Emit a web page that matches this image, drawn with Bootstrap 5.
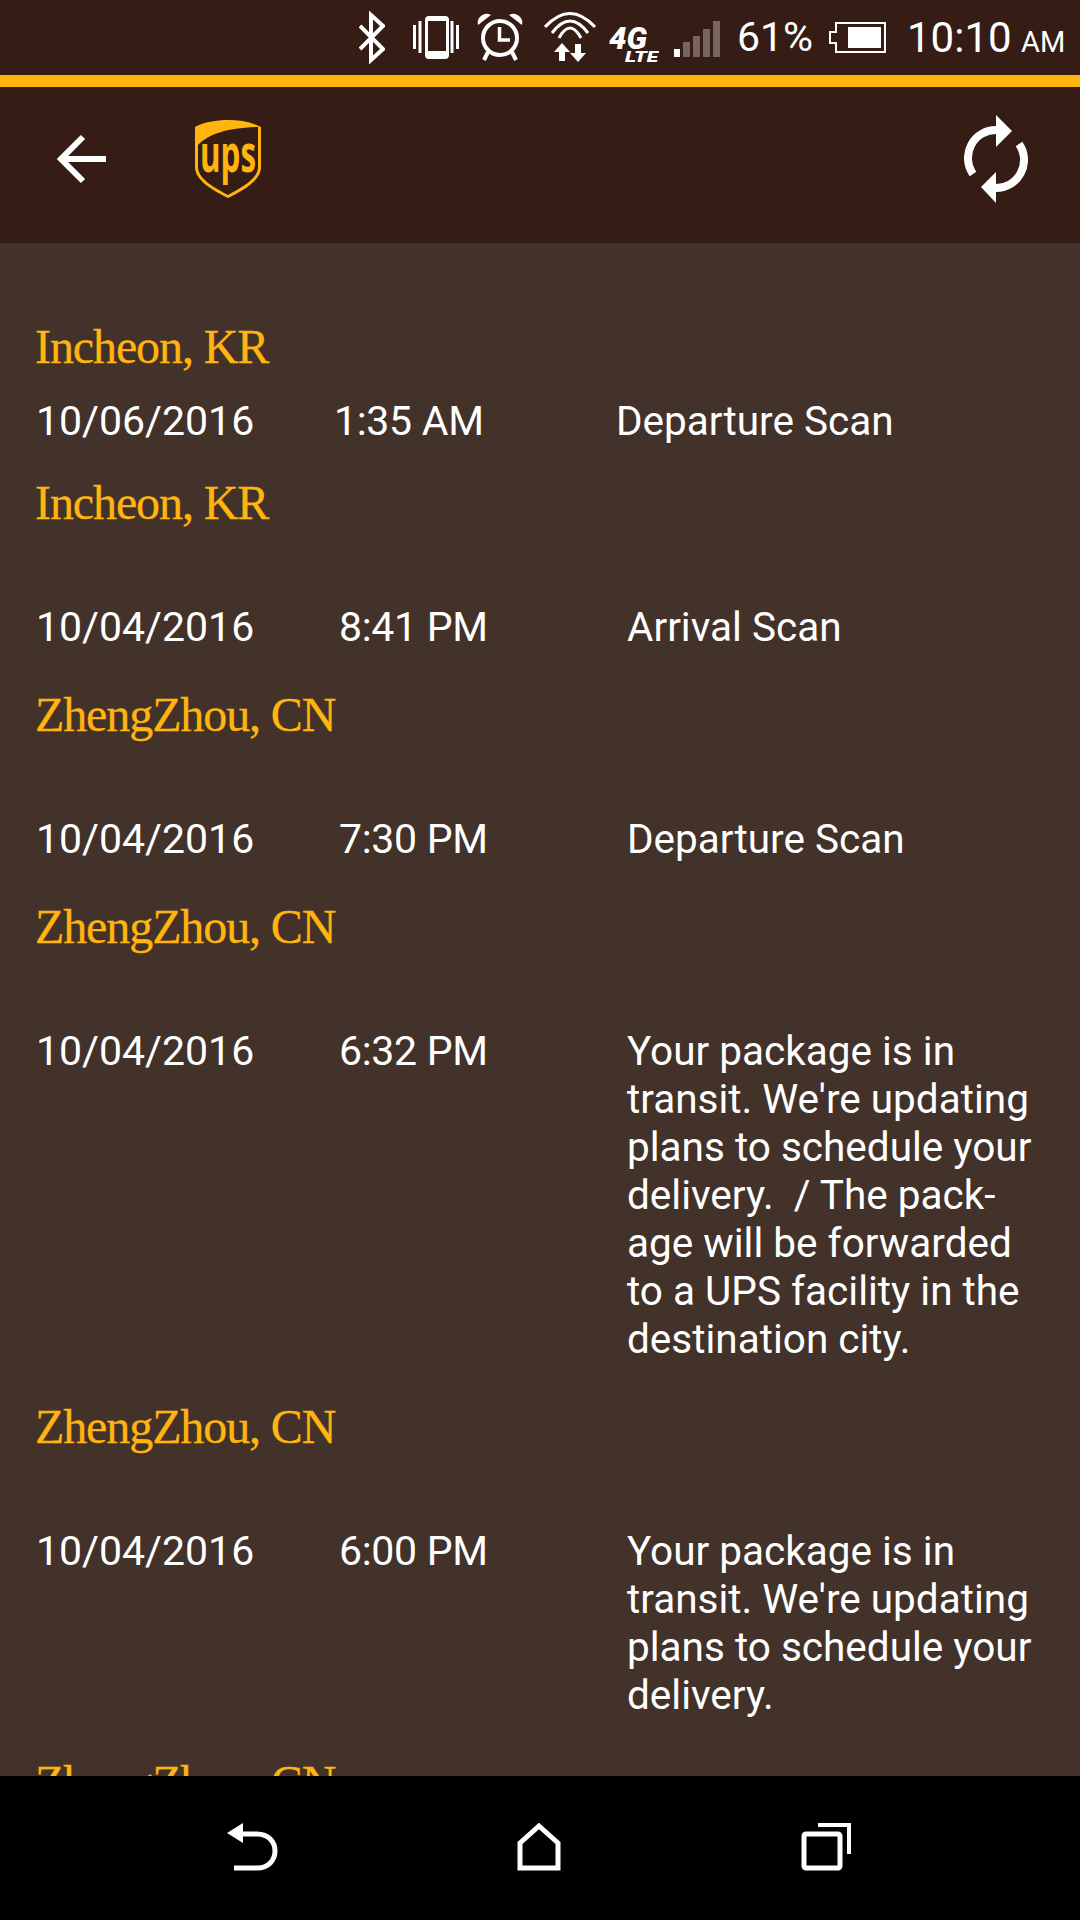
<!DOCTYPE html>
<html lang="en">
<head>
    <meta charset="UTF-8">
    <meta name="viewport" content="width=device-width, initial-scale=1.0">
    <title>UPS Tracking</title>
    <link href="https://cdn.jsdelivr.net/npm/bootstrap@5.3.0/dist/css/bootstrap.min.css" rel="stylesheet">
    <style>
        html, body { margin: 0; height: 1920px; overflow: hidden; background: #000; }
        body { font-family: Roboto, "Liberation Sans", sans-serif; }
        .phone { width: 1080px; height: 1920px; }
        .status-bar { height: 75px; background: #351c15; color: #fff; padding-left: 359px; }
        .status-bar svg { display: block; flex: none; height: 75px; }
        .ico-vibrate { margin-left: 28px; }
        .ico-alarm { margin-left: 18px; }
        .ico-wifi { margin-left: 21px; }
        .ico-lte { margin-left: 13px; }
        .ico-signal { margin-left: 15px; }
        .batt-text { font-size: 41px; line-height: 1; margin-left: 16px; width: 79px; white-space: nowrap; }
        .ico-batt { margin-left: 13px; }
        .clock { font-size: 42px; line-height: 1; margin-left: 21px; white-space: nowrap; }
        .clock span { font-size: 29px; margin-left: -1px; }
        .accent { height: 12px; background: #ffb40f; }
        .app-bar { height: 156px; background: #351c15; padding-bottom: 12px; }
        .ico-back { margin-left: 57px; }
        .ico-shield { margin-left: 89px; }
        .ico-refresh { margin-right: 52px; }
        .feed { height: 1533px; background: #42322a; overflow: hidden; padding: 74px 0 0 36px; }
        .place { font-family: "Liberation Serif", serif; font-size: 48px; letter-spacing: -1.1px; line-height: 60px; color: #ffb40f; -webkit-text-stroke: 0.3px #ffb40f; margin-left: -1px; }
        .scan { font-size: 41px; line-height: 48px; color: #fff; }
        .scan-date { width: 303px; flex: none; }
        .scan-time { width: 288px; flex: none; letter-spacing: -0.3px; }
        .scan-text { width: 420px; flex: none; hyphens: manual; font-size: 40.5px; }
        .first .scan-date { width: 298px; }
        .first .scan-time { width: 282px; }
        .place-first { margin-bottom: 20px; }
        .scan-first { margin-bottom: 28px; }
        .place-more { margin-bottom: 70px; }
        .scan-more { margin-bottom: 34px; }
        .sys-nav { height: 144px; background: #000; padding-top: 47px; }
        .sys-nav svg { flex: none; display: block; }
        .nav-back { margin-left: 227px; }
        .nav-home { margin-left: 239px; }
        .nav-recent { margin-left: 240px; }
    </style>
</head>
<body>
<div class="phone d-flex flex-column">
    <div class="status-bar d-flex align-items-center">
        <!-- bluetooth -->
        <svg width="26" viewBox="0 0 26 75" fill="none" stroke="#fff" stroke-width="4"><path d="M1 26L24 49L12 60V15L24 26L1 49"/></svg>
        <!-- vibrate -->
        <svg class="ico-vibrate" width="46" viewBox="0 0 46 75"><rect x="12" y="16" width="24" height="43" rx="4" fill="#fff"/><rect x="15" y="21" width="18" height="30" fill="#351c15"/><path d="M1.500 25v24M7 21v32M39 21v32M44.500 25v24" stroke="#fff" stroke-width="3"/></svg>
        <!-- alarm -->
        <svg class="ico-alarm" width="46" viewBox="0 0 46 75"><circle cx="23" cy="38" r="17" fill="none" stroke="#fff" stroke-width="4"/><path d="M22.500 27v13H33" fill="none" stroke="#fff" stroke-width="3.500"/><path d="M1 25a9 9 0 0 1 13-10zM45 25a9 9 0 0 0-13-10z" fill="#fff"/><path d="M11 52l-4 8M35 52l4 8" stroke="#fff" stroke-width="4"/></svg>
        <!-- wifi and data arrows -->
        <svg class="ico-wifi" width="52" viewBox="0 0 52 75" fill="none" stroke="#fff" stroke-width="3"><path d="M1 27Q26 0 51 27M8 33Q26 9 44 33M15 38Q26 18 37 38"/><path d="M18 43l8 9h-5v9h-6v-9h-5zM34 62l-8-9h5v-9h6v9h5z" fill="#fff" stroke="none"/></svg>
        <!-- 4G LTE -->
        <svg class="ico-lte" width="50" viewBox="0 0 50 75" fill="#fff" font-family="Roboto, sans-serif" font-weight="900" font-style="italic"><text x="0" y="49" font-size="32" textLength="38" lengthAdjust="spacingAndGlyphs">4G</text><text x="16" y="62" font-size="14" textLength="33" lengthAdjust="spacingAndGlyphs">LTE</text></svg>
        <!-- signal -->
        <svg class="ico-signal" width="47" viewBox="0 0 47 75"><rect x="0" y="49" width="6" height="8" fill="#fff"/><rect x="9" y="42" width="7" height="15" fill="#76665f"/><rect x="19" y="36" width="7" height="21" fill="#76665f"/><rect x="29" y="29" width="7" height="28" fill="#76665f"/><rect x="39" y="21" width="7" height="36" fill="#76665f"/></svg>
        <div class="batt-text">61%</div>
        <!-- battery -->
        <svg class="ico-batt" width="57" viewBox="0 0 57 75"><path d="M7 23H56V52H7V43H1V32H7z" fill="none" stroke="#fff" stroke-width="2"/><rect x="19" y="27" width="33" height="21" fill="#fff"/></svg>
        <div class="clock">10:10 <span>AM</span></div>
    </div>
    <div class="accent"></div>
    <div class="app-bar d-flex align-items-center">
        <svg class="ico-back" width="49" height="50" viewBox="0 0 49 50" fill="none" stroke="#fff" stroke-width="6"><path d="M49 25H4M26 3L4 25L26 47"/></svg>
        <!-- ups shield -->
        <svg class="ico-shield" width="66" height="78" viewBox="0 0 66 78">
            <path d="M33 0C21 0 9 2 0 7V47C0 61 19 71 33 78C47 71 66 61 66 47V7C57 2 45 0 33 0Z" fill="#ffb40f"/>
            <path d="M3 25C14 14 32 8 63 7V47C63 59 46 68 33 75C20 68 3 59 3 47Z" fill="#351c15"/>
            <text x="5" y="52" font-family="'Open Sans', Roboto, sans-serif" font-weight="700" font-size="52" fill="#ffb40f" textLength="56" lengthAdjust="spacingAndGlyphs">ups</text>
        </svg>
        <svg class="ico-refresh ms-auto" width="64" height="88" viewBox="0 0 64 88">
            <path d="M9 59A28 28 0 0 1 33 15" fill="none" stroke="#fff" stroke-width="8"/>
            <path d="M32 0L48 16L32 32Z" fill="#fff"/>
            <path d="M55 29A28 28 0 0 1 31 73" fill="none" stroke="#fff" stroke-width="8"/>
            <path d="M32 57L17 72L32 88Z" fill="#fff"/>
        </svg>
    </div>
    <div class="feed" id="feed"></div>
    <div class="sys-nav d-flex align-items-start">
        <svg class="nav-back" width="51" height="48" viewBox="0 0 51 48" fill="none" stroke="#fff" stroke-width="5"><path d="M12 11H30C54 11 54 45 30 45H7"/><path d="M0 10L16 0V20Z" fill="#fff" stroke="none"/></svg>
        <svg class="nav-home" width="44" height="48" viewBox="0 0 44 48" fill="none" stroke="#fff" stroke-width="5"><path d="M22 3L41 20V45H3V20Z"/></svg>
        <svg class="nav-recent" width="50" height="48" viewBox="0 0 50 48" fill="none" stroke="#fff" stroke-width="5"><path d="M17 2H48V31" stroke-width="4"/><rect x="3" y="11" width="36" height="34" rx="2"/></svg>
    </div>
</div>
<script>
    // tracking rows, newest first
    const scans = [
        ['Incheon, KR', '10/06/2016', '1:35 AM', 'Departure Scan', 'first'],
        ['Incheon, KR', '10/04/2016', '8:41 PM', 'Arrival Scan'],
        ['ZhengZhou, CN', '10/04/2016', '7:30 PM', 'Departure Scan'],
        ['ZhengZhou, CN', '10/04/2016', '6:32 PM', "Your package is in transit. We're updating plans to schedule your delivery.&nbsp; / The pack&shy;age will be forwarded to a UPS facility in the destination city."],
        ['ZhengZhou, CN', '10/04/2016', '6:00 PM', "Your package is in transit. We're updating plans to schedule your delivery."],
        ['ZhengZhou, CN', '', '', '']
    ];
    document.getElementById('feed').innerHTML = scans.map(s => `
        <div class="place ${s[4] ? 'place-first' : 'place-more'}">${s[0]}</div>
        <div class="scan d-flex ${s[4] ? 'first scan-first' : 'scan-more'}">
            <div class="scan-date">${s[1]}</div>
            <div class="scan-time">${s[2]}</div>
            <div class="scan-text">${s[3]}</div>
        </div>`).join('');
</script>
<script src="https://cdn.jsdelivr.net/npm/bootstrap@5.3.0/dist/js/bootstrap.bundle.min.js"></script>
</body>
</html>
